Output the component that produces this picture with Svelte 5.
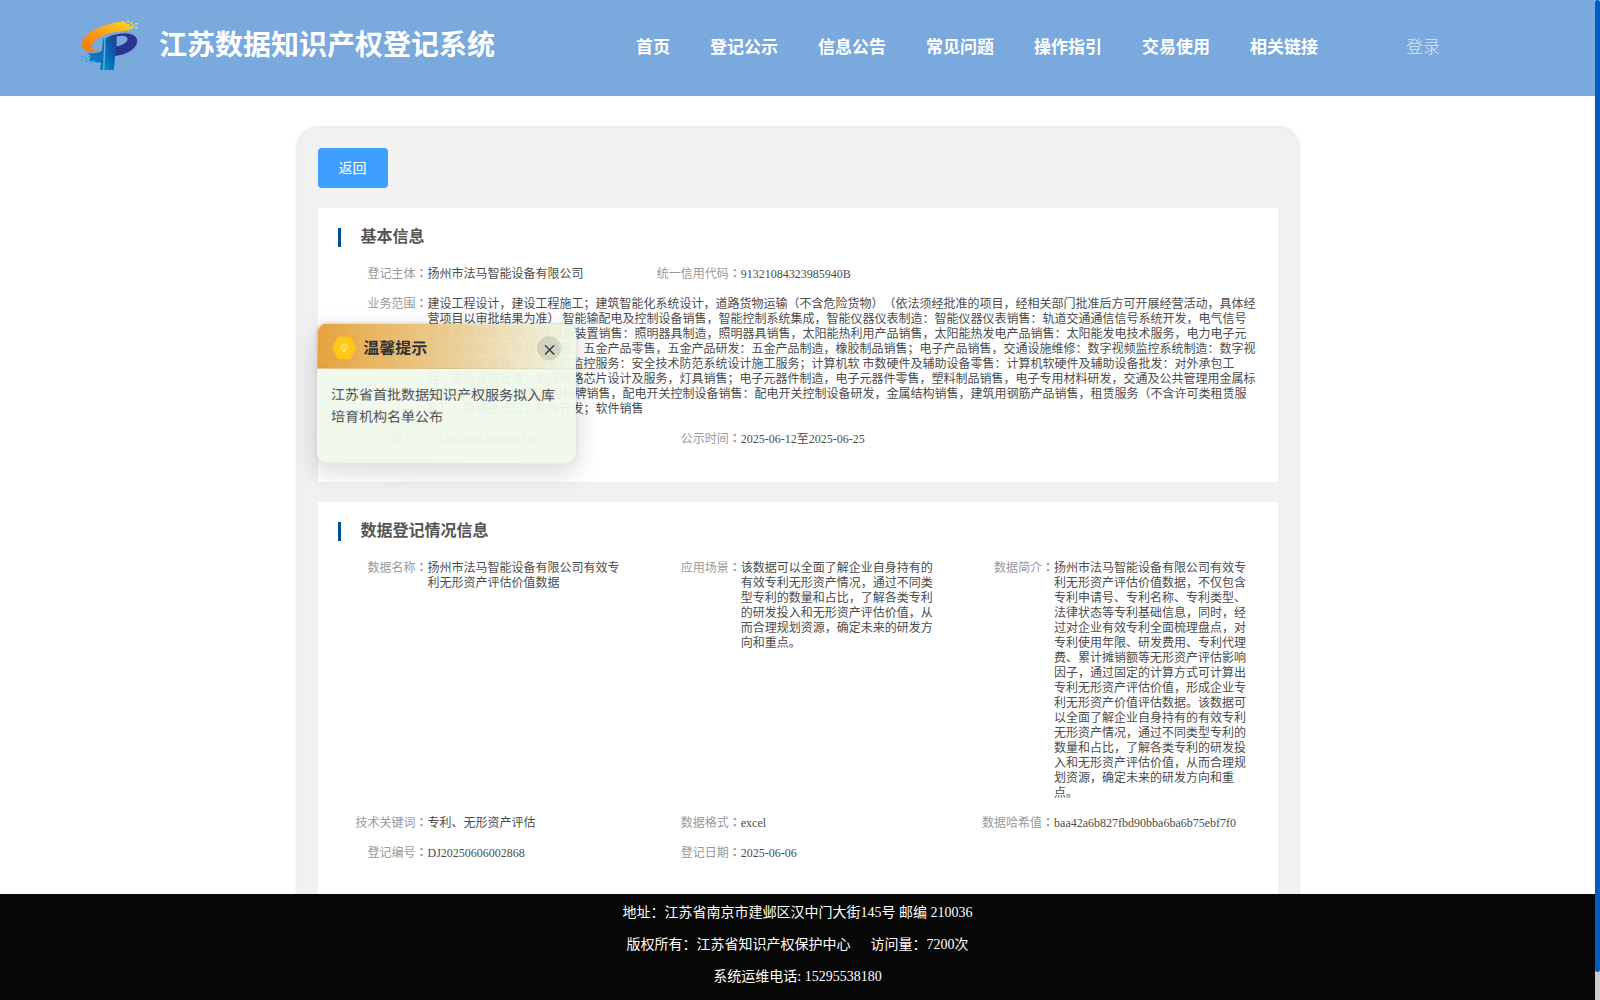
<script lang="ts">
	type Item = { label: string; lines: string[] };

	const nav = ['首页', '登记公示', '信息公告', '常见问题', '操作指引', '交易使用', '相关链接'];

	const subject: Item[] = [
		{ label: '登记主体', lines: ['扬州市法马智能设备有限公司'] },
		{ label: '统一信用代码', lines: ['91321084323985940B'] }
	];

	const scope: Item = {
		label: '业务范围',
		lines: [
			'建设工程设计，建设工程施工；建筑智能化系统设计，道路货物运输（不含危险货物）（依法须经批准的项目，经相关部门批准后方可开展经营活动，具体经',
			'营项目以审批结果为准） 智能输配电及控制设备销售，智能控制系统集成，智能仪器仪表制造：智能仪器仪表销售：轨道交通通信信号系统开发，电气信号',
			'设备装置制造 电气信号设备装置销售：照明器具制造，照明器具销售，太阳能热利用产品销售，太阳能热发电产品销售：太阳能发电技术服务，电力电子元',
			'器件销售电子专用材料销售，五金产品零售，五金产品研发：五金产品制造，橡胶制品销售；电子产品销售，交通设施维修：数字视频监控系统制造：数字视',
			'频监控系统销售，安全系统监控服务：安全技术防范系统设计施工服务；计算机软 市数硬件及辅助设备零售：计算机软硬件及辅助设备批发：对外承包工',
			'程，市政设施管理：集成电路芯片设计及服务，灯具销售；电子元器件制造，电子元器件零售，塑料制品销售，电子专用材料研发，交通及公共管理用金属标',
			'牌制造 交通及公共管理用标牌销售，配电开关控制设备销售：配电开关控制设备研发，金属结构销售，建筑用钢筋产品销售，租赁服务（不含许可类租赁服',
			'务）：货物进出口，软件开发；软件销售'
		]
	};

	const notice: Item[] = [
		{ label: '公示编号', lines: ['GS2025061100001310'] },
		{ label: '公示时间', lines: ['2025-06-12至2025-06-25'] }
	];

	const details: Item[] = [
		{ label: '数据名称', lines: ['扬州市法马智能设备有限公司有效专', '利无形资产评估价值数据'] },
		{
			label: '应用场景',
			lines: [
				'该数据可以全面了解企业自身持有的',
				'有效专利无形资产情况，通过不同类',
				'型专利的数量和占比，了解各类专利',
				'的研发投入和无形资产评估价值，从',
				'而合理规划资源，确定未来的研发方',
				'向和重点。'
			]
		},
		{
			label: '数据简介',
			lines: [
				'扬州市法马智能设备有限公司有效专',
				'利无形资产评估价值数据，不仅包含',
				'专利申请号、专利名称、专利类型、',
				'法律状态等专利基础信息，同时，经',
				'过对企业有效专利全面梳理盘点，对',
				'专利使用年限、研发费用、专利代理',
				'费、累计摊销额等无形资产评估影响',
				'因子，通过固定的计算方式可计算出',
				'专利无形资产评估价值，形成企业专',
				'利无形资产价值评估数据。该数据可',
				'以全面了解企业自身持有的有效专利',
				'无形资产情况，通过不同类型专利的',
				'数量和占比，了解各类专利的研发投',
				'入和无形资产评估价值，从而合理规',
				'划资源，确定未来的研发方向和重',
				'点。'
			]
		},
		{ label: '技术关键词', lines: ['专利、无形资产评估'] },
		{ label: '数据格式', lines: ['excel'] },
		{ label: '数据哈希值', lines: ['baa42a6b827fbd90bba6ba6b75ebf7f0'] },
		{ label: '登记编号', lines: ['DJ20250606002868'] },
		{ label: '登记日期', lines: ['2025-06-06'] }
	];

	let showTip = $state(true);
</script>

{#snippet field(item: Item, wide = false)}
	<div class="field" class:wide>
		<span class="label">{item.label}<span class="colon">：</span></span>
		<div class="value">
			{#each item.lines as line}
				<div>{line}</div>
			{/each}
		</div>
	</div>
{/snippet}

<div class="page">
	<div class="content">
		<header>
			<svg class="logo" viewBox="60 58 180 154" aria-hidden="true">
				<defs>
					<linearGradient id="gold" x1="0" y1="1" x2="1" y2="0">
						<stop offset="0" stop-color="#f07800" />
						<stop offset="0.5" stop-color="#f9a01e" />
						<stop offset="1" stop-color="#fbdc1c" />
					</linearGradient>
					<linearGradient id="stem" x1="0" y1="1" x2="1" y2="0">
						<stop offset="0" stop-color="#0090cc" />
						<stop offset="0.5" stop-color="#0863b0" />
						<stop offset="1" stop-color="#2c3793" />
					</linearGradient>
				</defs>
				<path
					d="M191 62C124 70 65 99 65 132c0 15 14 24 43 23l14-5c-24 2-28-5-26-16 4-18 43-40 95-43l18-3 8-4 8-4-9-4-9 2 4-7-10-2z"
					fill="url(#gold)"
				/>
				<path
					d="M170 101c42-9 63 4 62 22-2 22-31 40-67 44v-28c23-4 37-13 38-23 0-9-13-13-33-8z"
					fill="#2b3390"
				/>
				<path d="M137 113q16-10 33-12v38q-4 13-5 29-1 24-4 41h-28z" fill="url(#stem)" />
				<path d="M129 115l4-2-4 96h-9l3-23c-16 1-28-1-38-8l8-4-11-7 11 3-4-7-10-5c20 2 33 0 46-7z" fill="#0878bd" />
				<g fill="#ffe11f">
					<path d="M202 62l7-2-1 4-7 2zM212 65l8-1-2 4-8 1zM226 68l10-2-2 5-9 1zM217 73l8 0-3 4-8-1zM226 79l9-1-4 5-7 0z" />
				</g>
				<g fill="#31a9df">
					<path d="M62 165l8 2 1 4-7-1zM72 171l8 1 2 5-8-2zM61 178l6 0 1 4-6 0zM75 180l8 1 2 4-8-1zM86 184l8 1 3 4-9-1zM97 179l9 2 0 4-8-1z" />
				</g>
			</svg>
			<h1>江苏数据知识产权登记系统</h1>
			<nav>
				{#each nav as name}
					<a href="#/">{name}</a>
				{/each}
			</nav>
			<a class="login" href="#/">登录</a>
		</header>

		<main>
			<div class="panel">
				<button type="button" class="back">返回</button>

				<section>
					<h2>基本信息</h2>
					<div class="grid">
						{#each subject as item}
							{@render field(item)}
						{/each}
					</div>
					<div class="grid">
						{@render field(scope, true)}
						{#each notice as item}
							{@render field(item)}
						{/each}
					</div>
				</section>

				<section>
					<h2>数据登记情况信息</h2>
					<div class="grid">
						{#each details as item}
							{@render field(item)}
						{/each}
					</div>
				</section>
			</div>
		</main>

		<footer>
			<p>地址：江苏省南京市建邺区汉中门大街145号 邮编 210036</p>
			<p>版权所有：江苏省知识产权保护中心<span class="visits">访问量：7200次</span></p>
			<p>系统运维电话: 15295538180</p>
		</footer>
	</div>

	<div class="scrollbar"><div class="thumb"></div></div>

	{#if showTip}
		<aside class="tip">
			<div class="tip-head">
				<span class="badge">
					<svg viewBox="0 0 12 12" fill="none" stroke="#fff2ae" aria-hidden="true">
						<circle cx="6" cy="5.5" r="3.7" />
						<path d="M4.5 4.5 6 6l1.5-1.5M6 6v3M4.5 10.5h3" />
					</svg>
				</span>
				<strong>温馨提示</strong>
				<button type="button" class="close" aria-label="关闭" onclick={() => (showTip = false)}>
					<svg viewBox="0 0 12 12" fill="none" stroke="#444" stroke-width="1.7" aria-hidden="true">
						<path d="M1 1l10 10M11 1 1 11" />
					</svg>
				</button>
			</div>
			<div class="tip-body">江苏省首批数据知识产权服务拟入库<br />培育机构名单公布</div>
		</aside>
	{/if}
</div>

<style>
	:global(body) {
		margin: 0;
		overflow: hidden;
	}

	.page {
		position: relative;
		display: flex;
		height: 1000px;
		overflow: hidden;
		background: #fff;
		font-family: 'Liberation Serif', 'Noto Sans CJK SC', serif;
		text-spacing-trim: space-all;
	}

	.content {
		display: flex;
		flex-direction: column;
		flex: 1;
		min-width: 0;
	}

	header {
		display: flex;
		align-items: center;
		flex: none;
		box-sizing: border-box;
		height: 96px;
		padding-left: 80px;
		background: #79a9dd;
		color: #fff;
		white-space: nowrap;
	}

	.logo {
		width: 60px;
		height: 51px;
		margin-top: -6px;
	}

	h1 {
		width: 477px;
		margin: -4px 0 0 19px;
		font-size: 28px;
		line-height: 40px;
	}

	nav {
		display: flex;
		gap: 40px;
		font-size: 17px;
		font-weight: bold;
		line-height: 24px;
	}

	header a {
		color: #fff;
		text-decoration: none;
	}

	header .login {
		margin-left: 88px;
		color: rgba(255, 255, 255, 0.75);
		font-size: 17px;
		font-weight: 300;
		line-height: 24px;
	}

	main {
		flex: 1;
		min-height: 0;
		padding-top: 32px;
		overflow: hidden;
	}

	.panel {
		box-sizing: border-box;
		width: 1000px;
		height: 1000px;
		margin: 0 auto;
		padding: 20px;
		border-radius: 20px;
		background: #f1f1f1;
		box-shadow: 0 0 4px rgba(0, 0, 0, 0.2);
	}

	.back {
		display: block;
		width: 70px;
		height: 40px;
		padding: 0 0 2px;
		border: 0;
		border-radius: 4px;
		background: #409eff;
		color: #fff;
		font: inherit;
		font-size: 14px;
	}

	section {
		margin-top: 20px;
		padding: 20px 0 20px 20px;
		background: #fff;
	}

	h2 {
		height: 19px;
		margin: 0 0 20px;
		padding-left: 20px;
		border-left: 3px solid #00508f;
		color: #555;
		font-size: 16px;
		line-height: 17px;
	}

	.grid {
		display: grid;
		grid-template-columns: repeat(3, 313.3px);
	}

	.field {
		display: flex;
		margin-bottom: 15px;
		font-size: 12px;
		line-height: 15px;
		white-space: nowrap;
	}

	.wide {
		grid-column: 1 / -1;
	}

	.label {
		flex: none;
		width: 90px;
		height: 15px;
		color: #999;
		text-align: right;
	}

	/* full-width colon centred in its cell */
	.colon {
		font-family: 'Noto Sans CJK TC', sans-serif;
		font-weight: bold;
		line-height: 1;
	}

	.value {
		color: #4c4c4c;
	}

	.value div {
		height: 15px;
	}

	footer {
		flex: none;
		box-sizing: border-box;
		height: 106px;
		padding-top: 3px;
		background: #070707;
		color: #fff;
		font-size: 14px;
		text-align: center;
	}

	footer p {
		margin: 0;
		height: 32px;
		line-height: 32px;
	}

	.visits {
		margin-left: 20px;
	}

	.scrollbar {
		flex: none;
		width: 5px;
		background: #ccc;
	}

	.thumb {
		height: 972px;
		border-radius: 3px;
		background: #005bc2;
	}

	/* floating notice */
	.tip {
		position: absolute;
		top: 322px;
		left: 315px;
		box-sizing: border-box;
		width: 263px;
		height: 143px;
		border: 2px solid rgba(0, 0, 0, 0.1);
		border-radius: 12px;
		background: rgba(240, 249, 235, 0.95);
		background-clip: padding-box;
		box-shadow: 0 8px 24px rgba(0, 0, 0, 0.15);
		overflow: hidden;
		transform: rotate(0.2deg);
	}

	.tip-head {
		display: flex;
		align-items: center;
		box-sizing: border-box;
		height: 45px;
		padding: 4px 15px 0;
		border-bottom: 1px solid rgba(0, 0, 0, 0.06);
		background: linear-gradient(90deg, #e6a23c, rgba(230, 162, 60, 0));
	}

	.badge {
		display: flex;
		align-items: center;
		justify-content: center;
		width: 24px;
		height: 23px;
		background: #ffc917;
		clip-path: polygon(25% 0, 75% 0, 100% 50%, 75% 100%, 25% 100%, 0 50%);
	}

	.badge svg {
		width: 10px;
		height: 10px;
	}

	.tip strong {
		flex: 1;
		margin-left: 7px;
		padding-top: 2px;
		color: #303133;
		font-size: 16px;
		line-height: 24px;
	}

	.close {
		display: flex;
		align-items: center;
		justify-content: center;
		width: 24px;
		height: 24px;
		padding: 2px 0 0;
		border: 0;
		border-radius: 50%;
		background: rgba(0, 0, 0, 0.11);
	}

	.close svg {
		width: 11px;
		height: 11px;
	}

	.tip-body {
		padding: 16px 14px;
		color: #505255;
		font-size: 14px;
		line-height: 22.4px;
		white-space: nowrap;
	}
</style>
